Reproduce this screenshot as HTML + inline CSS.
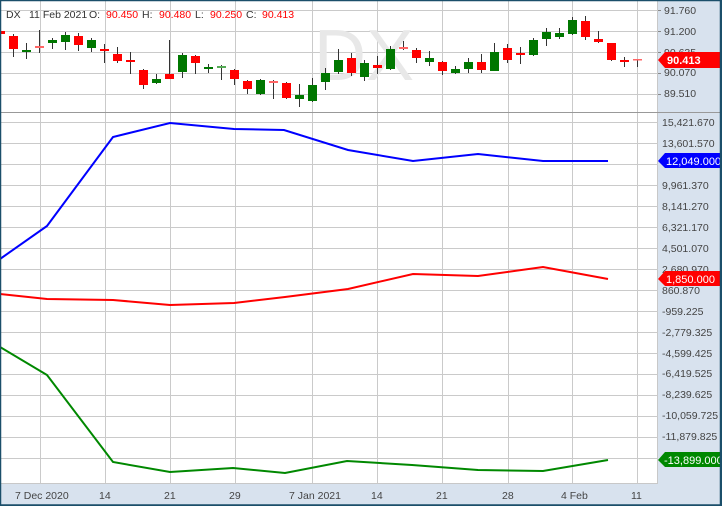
<!DOCTYPE html>
<html><head><meta charset="utf-8"><style>
html,body{margin:0;padding:0;background:#fff;}
svg{display:block;font-family:"Liberation Sans",sans-serif;}
</style></head><body>
<svg width="722" height="506" viewBox="0 0 722 506" xmlns="http://www.w3.org/2000/svg">
<rect x="0" y="0" width="722" height="506" fill="#fff"/>
<rect x="658" y="0" width="64" height="506" fill="#d8e2ee"/>
<rect x="0" y="483" width="722" height="23" fill="#d8e2ee"/>
<line x1="0" y1="483.5" x2="658" y2="483.5" stroke="#c8c8c8"/>
<line x1="657.5" y1="0" x2="657.5" y2="483" stroke="#c8c8c8"/>
<g stroke="#cacaca" stroke-width="1">
<line x1="40.5" y1="0" x2="40.5" y2="483"/><line x1="105.5" y1="0" x2="105.5" y2="483"/>
<line x1="170.5" y1="0" x2="170.5" y2="483"/><line x1="235.5" y1="0" x2="235.5" y2="483"/>
<line x1="312.5" y1="0" x2="312.5" y2="483"/><line x1="377.5" y1="0" x2="377.5" y2="483"/>
<line x1="442.5" y1="0" x2="442.5" y2="483"/><line x1="508.5" y1="0" x2="508.5" y2="483"/>
<line x1="572.5" y1="0" x2="572.5" y2="483"/><line x1="637.5" y1="0" x2="637.5" y2="483"/>
<line x1="0" y1="10.5" x2="658" y2="10.5"/><line x1="0" y1="31.5" x2="658" y2="31.5"/>
<line x1="0" y1="52.5" x2="658" y2="52.5"/><line x1="0" y1="73.5" x2="658" y2="73.5"/>
<line x1="0" y1="94.5" x2="658" y2="94.5"/>
<line x1="0" y1="122.5" x2="658" y2="122.5"/><line x1="0" y1="143.5" x2="658" y2="143.5"/>
<line x1="0" y1="164.5" x2="658" y2="164.5"/><line x1="0" y1="185.5" x2="658" y2="185.5"/>
<line x1="0" y1="206.5" x2="658" y2="206.5"/><line x1="0" y1="227.5" x2="658" y2="227.5"/>
<line x1="0" y1="248.5" x2="658" y2="248.5"/><line x1="0" y1="269.5" x2="658" y2="269.5"/>
<line x1="0" y1="290.5" x2="658" y2="290.5"/><line x1="0" y1="311.5" x2="658" y2="311.5"/>
<line x1="0" y1="332.5" x2="658" y2="332.5"/><line x1="0" y1="353.5" x2="658" y2="353.5"/>
<line x1="0" y1="374.5" x2="658" y2="374.5"/><line x1="0" y1="395.5" x2="658" y2="395.5"/>
<line x1="0" y1="416.5" x2="658" y2="416.5"/><line x1="0" y1="437.5" x2="658" y2="437.5"/>
<line x1="0" y1="458.5" x2="658" y2="458.5"/>
</g>
<line x1="0" y1="112.5" x2="722" y2="112.5" stroke="#999"/>
<text x="314" y="80" font-size="72" fill="#e8e8e8">DX</text>
<g>
<line x1="13.5" y1="34" x2="13.5" y2="57" stroke="#333"/><rect x="9" y="36" width="9" height="13" fill="#f00"/>
<rect x="0" y="31" width="5" height="3" fill="#f00"/>
<line x1="26.5" y1="43" x2="26.5" y2="59" stroke="#333"/><rect x="22" y="50" width="9" height="2" fill="#070"/>
<line x1="39.5" y1="30" x2="39.5" y2="53" stroke="#333"/><rect x="35" y="46" width="9" height="2" fill="#f66"/>
<line x1="52.5" y1="38" x2="52.5" y2="49" stroke="#333"/><rect x="48" y="40" width="9" height="3" fill="#070"/>
<line x1="65.5" y1="32" x2="65.5" y2="50" stroke="#333"/><rect x="61" y="35" width="9" height="7" fill="#070"/>
<line x1="78.5" y1="33" x2="78.5" y2="51" stroke="#333"/><rect x="74" y="36" width="9" height="9" fill="#f00"/>
<line x1="91.5" y1="38" x2="91.5" y2="52" stroke="#333"/><rect x="87" y="40" width="9" height="8" fill="#070"/>
<line x1="104.5" y1="44" x2="104.5" y2="63" stroke="#333"/><rect x="100" y="49" width="9" height="2" fill="#f00"/>
<line x1="117.5" y1="47" x2="117.5" y2="63" stroke="#333"/><rect x="113" y="54" width="9" height="7" fill="#f00"/>
<line x1="130.5" y1="52" x2="130.5" y2="74" stroke="#333"/><rect x="126" y="60" width="9" height="2" fill="#f00"/>
<line x1="143.5" y1="69" x2="143.5" y2="89" stroke="#333"/><rect x="139" y="70" width="9" height="15" fill="#f00"/>
<line x1="156.5" y1="74" x2="156.5" y2="84" stroke="#333"/><rect x="152" y="79" width="9" height="4" fill="#070"/>
<line x1="169.5" y1="40" x2="169.5" y2="79" stroke="#333"/><rect x="165" y="74" width="9" height="5" fill="#f00"/>
<line x1="182.5" y1="53" x2="182.5" y2="78" stroke="#333"/><rect x="178" y="55" width="9" height="17" fill="#070"/>
<line x1="195.5" y1="55" x2="195.5" y2="74" stroke="#333"/><rect x="191" y="56" width="9" height="7" fill="#f00"/>
<line x1="208.5" y1="64" x2="208.5" y2="73" stroke="#333"/><rect x="204" y="67" width="9" height="2" fill="#070"/>
<line x1="221.5" y1="65" x2="221.5" y2="80" stroke="#333"/><rect x="217" y="66" width="9" height="2" fill="#5a5"/>
<line x1="234.5" y1="69" x2="234.5" y2="85" stroke="#333"/><rect x="230" y="70" width="9" height="9" fill="#f00"/>
<line x1="247.5" y1="80" x2="247.5" y2="94" stroke="#333"/><rect x="243" y="81" width="9" height="8" fill="#f00"/>
<line x1="260.5" y1="79" x2="260.5" y2="95" stroke="#333"/><rect x="256" y="80" width="9" height="14" fill="#070"/>
<line x1="273.5" y1="80" x2="273.5" y2="99" stroke="#333"/><rect x="269" y="81" width="9" height="2" fill="#f66"/>
<line x1="286.5" y1="82" x2="286.5" y2="99" stroke="#333"/><rect x="282" y="83" width="9" height="15" fill="#f00"/>
<line x1="299.5" y1="84" x2="299.5" y2="107" stroke="#333"/><rect x="295" y="95" width="9" height="4" fill="#070"/>
<line x1="312.5" y1="78" x2="312.5" y2="102" stroke="#333"/><rect x="308" y="85" width="9" height="16" fill="#070"/>
<line x1="325.5" y1="68" x2="325.5" y2="90" stroke="#333"/><rect x="321" y="73" width="9" height="9" fill="#070"/>
<line x1="338.5" y1="49" x2="338.5" y2="74" stroke="#333"/><rect x="334" y="60" width="9" height="12" fill="#070"/>
<line x1="351.5" y1="53" x2="351.5" y2="76" stroke="#333"/><rect x="347" y="58" width="9" height="15" fill="#f00"/>
<line x1="364.5" y1="60" x2="364.5" y2="81" stroke="#333"/><rect x="360" y="63" width="9" height="14" fill="#070"/>
<line x1="377.5" y1="56" x2="377.5" y2="74" stroke="#333"/><rect x="373" y="65" width="9" height="3" fill="#f00"/>
<line x1="390.5" y1="46" x2="390.5" y2="70" stroke="#333"/><rect x="386" y="49" width="9" height="20" fill="#070"/>
<line x1="403.5" y1="41" x2="403.5" y2="50" stroke="#333"/><rect x="399" y="47" width="9" height="2" fill="#f66"/>
<line x1="416.5" y1="48" x2="416.5" y2="63" stroke="#333"/><rect x="412" y="50" width="9" height="8" fill="#f00"/>
<line x1="429.5" y1="51" x2="429.5" y2="66" stroke="#333"/><rect x="425" y="58" width="9" height="4" fill="#070"/>
<line x1="442.5" y1="61" x2="442.5" y2="75" stroke="#333"/><rect x="438" y="62" width="9" height="9" fill="#f00"/>
<line x1="455.5" y1="66" x2="455.5" y2="74" stroke="#333"/><rect x="451" y="69" width="9" height="4" fill="#070"/>
<line x1="468.5" y1="58" x2="468.5" y2="73" stroke="#333"/><rect x="464" y="62" width="9" height="7" fill="#070"/>
<line x1="481.5" y1="54" x2="481.5" y2="73" stroke="#333"/><rect x="477" y="62" width="9" height="8" fill="#f00"/>
<line x1="494.5" y1="43" x2="494.5" y2="71" stroke="#333"/><rect x="490" y="52" width="9" height="19" fill="#070"/>
<line x1="507.5" y1="44" x2="507.5" y2="63" stroke="#333"/><rect x="503" y="48" width="9" height="12" fill="#f00"/>
<line x1="520.5" y1="47" x2="520.5" y2="64" stroke="#333"/><rect x="516" y="53" width="9" height="2" fill="#f00"/>
<line x1="533.5" y1="38" x2="533.5" y2="56" stroke="#333"/><rect x="529" y="40" width="9" height="15" fill="#070"/>
<line x1="546.5" y1="28" x2="546.5" y2="46" stroke="#333"/><rect x="542" y="32" width="9" height="7" fill="#070"/>
<line x1="559.5" y1="28" x2="559.5" y2="39" stroke="#333"/><rect x="555" y="33" width="9" height="4" fill="#070"/>
<line x1="572.5" y1="17" x2="572.5" y2="35" stroke="#333"/><rect x="568" y="20" width="9" height="14" fill="#070"/>
<line x1="585.5" y1="16" x2="585.5" y2="40" stroke="#333"/><rect x="581" y="21" width="9" height="16" fill="#f00"/>
<line x1="598.5" y1="31" x2="598.5" y2="43" stroke="#333"/><rect x="594" y="39" width="9" height="3" fill="#f00"/>
<line x1="611.5" y1="43" x2="611.5" y2="61" stroke="#333"/><rect x="607" y="43" width="9" height="17" fill="#f00"/>
<line x1="624.5" y1="57" x2="624.5" y2="67" stroke="#333"/><rect x="620" y="60" width="9" height="2" fill="#f00"/>
<line x1="637.5" y1="59" x2="637.5" y2="67" stroke="#333"/><rect x="633" y="59" width="9" height="1.5" fill="#f66"/>
</g>
<g font-size="10.5">
<text x="6" y="18" fill="#333">DX</text>
<text x="29" y="18" fill="#333">11 Feb 2021</text>
<text x="89" y="18" fill="#333">O:</text>
<text x="106" y="18" fill="#f00">90.450</text>
<text x="142" y="18" fill="#333">H:</text>
<text x="159" y="18" fill="#f00">90.480</text>
<text x="195" y="18" fill="#333">L:</text>
<text x="210" y="18" fill="#f00">90.250</text>
<text x="246" y="18" fill="#333">C:</text>
<text x="262" y="18" fill="#f00">90.413</text>
</g>
<polyline fill="none" stroke="#00f" stroke-width="2" points="0,259 47,226 113,137 170,123 234,129 284,130 348,150 413,161 478,154 543,161 608,161"/>
<polyline fill="none" stroke="#f00" stroke-width="2" points="0,294 47,299 113,300 170,305 234,303 285,297 348,289 413,274 478,276 543,267 608,279"/>
<polyline fill="none" stroke="#080" stroke-width="2" points="0,347 47,375 113,462 170,472 233,468 285,473 347,461 412,465 478,470 543,471 608,460"/>
<g font-size="10.5" fill="#444">
<text x="664" y="14">91.760</text><text x="664" y="35">91.200</text>
<text x="664" y="56">90.635</text><text x="664" y="76">90.070</text><text x="664" y="97">89.510</text>
<text x="662" y="126">15,421.670</text><text x="662" y="147">13,601.570</text>
<text x="662" y="189">9,961.370</text><text x="662" y="210">8,141.270</text>
<text x="662" y="231">6,321.170</text><text x="662" y="252">4,501.070</text>
<text x="662" y="273">2,680.970</text><text x="662" y="294">860.870</text>
<text x="662" y="315">-959.225</text><text x="662" y="336">-2,779.325</text>
<text x="662" y="357">-4,599.425</text><text x="662" y="377">-6,419.525</text>
<text x="662" y="398">-8,239.625</text><text x="662" y="419">-10,059.725</text>
<text x="662" y="440">-11,879.825</text>
<text x="15" y="499">7 Dec 2020</text><text x="99" y="499">14</text><text x="164" y="499">21</text>
<text x="229" y="499">29</text><text x="289" y="499">7 Jan 2021</text><text x="371" y="499">14</text>
<text x="436" y="499">21</text><text x="502" y="499">28</text><text x="561" y="499">4 Feb</text>
<text x="631" y="499">11</text>
</g>
<g stroke="#888"><line x1="658" y1="10.5" x2="661" y2="10.5"/><line x1="658" y1="31.5" x2="661" y2="31.5"/><line x1="658" y1="52.5" x2="661" y2="52.5"/><line x1="658" y1="73.5" x2="661" y2="73.5"/><line x1="658" y1="94.5" x2="661" y2="94.5"/></g>
<polygon points="658,60 665,52 720,52 720,68 665,68" fill="#f00"/>
<text x="667" y="64" font-size="11" font-weight="bold" fill="#fff">90.413</text>
<polygon points="658,161 665,153 720,153 720,168 665,168" fill="#00f"/>
<text x="666" y="165" font-size="11" fill="#fff">12,049.000</text>
<polygon points="658,279 665,271 720,271 720,286 665,286" fill="#f00"/>
<text x="666" y="283" font-size="11" fill="#fff">1,850.000</text>
<polygon points="658,460 665,452 720,452 720,467 665,467" fill="#080"/>
<text x="664" y="464" font-size="11" fill="#fff">-13,899.000</text>
<rect x="0.5" y="0.5" width="720" height="504.5" fill="none" stroke="#1b4f6a" stroke-width="1.5"/>
<line x1="721" y1="0" x2="721" y2="506" stroke="#1b4f6a" stroke-width="2"/>
<line x1="0" y1="505.5" x2="722" y2="505.5" stroke="#1b4f6a" stroke-width="1.5"/>
</svg>
</body></html>
